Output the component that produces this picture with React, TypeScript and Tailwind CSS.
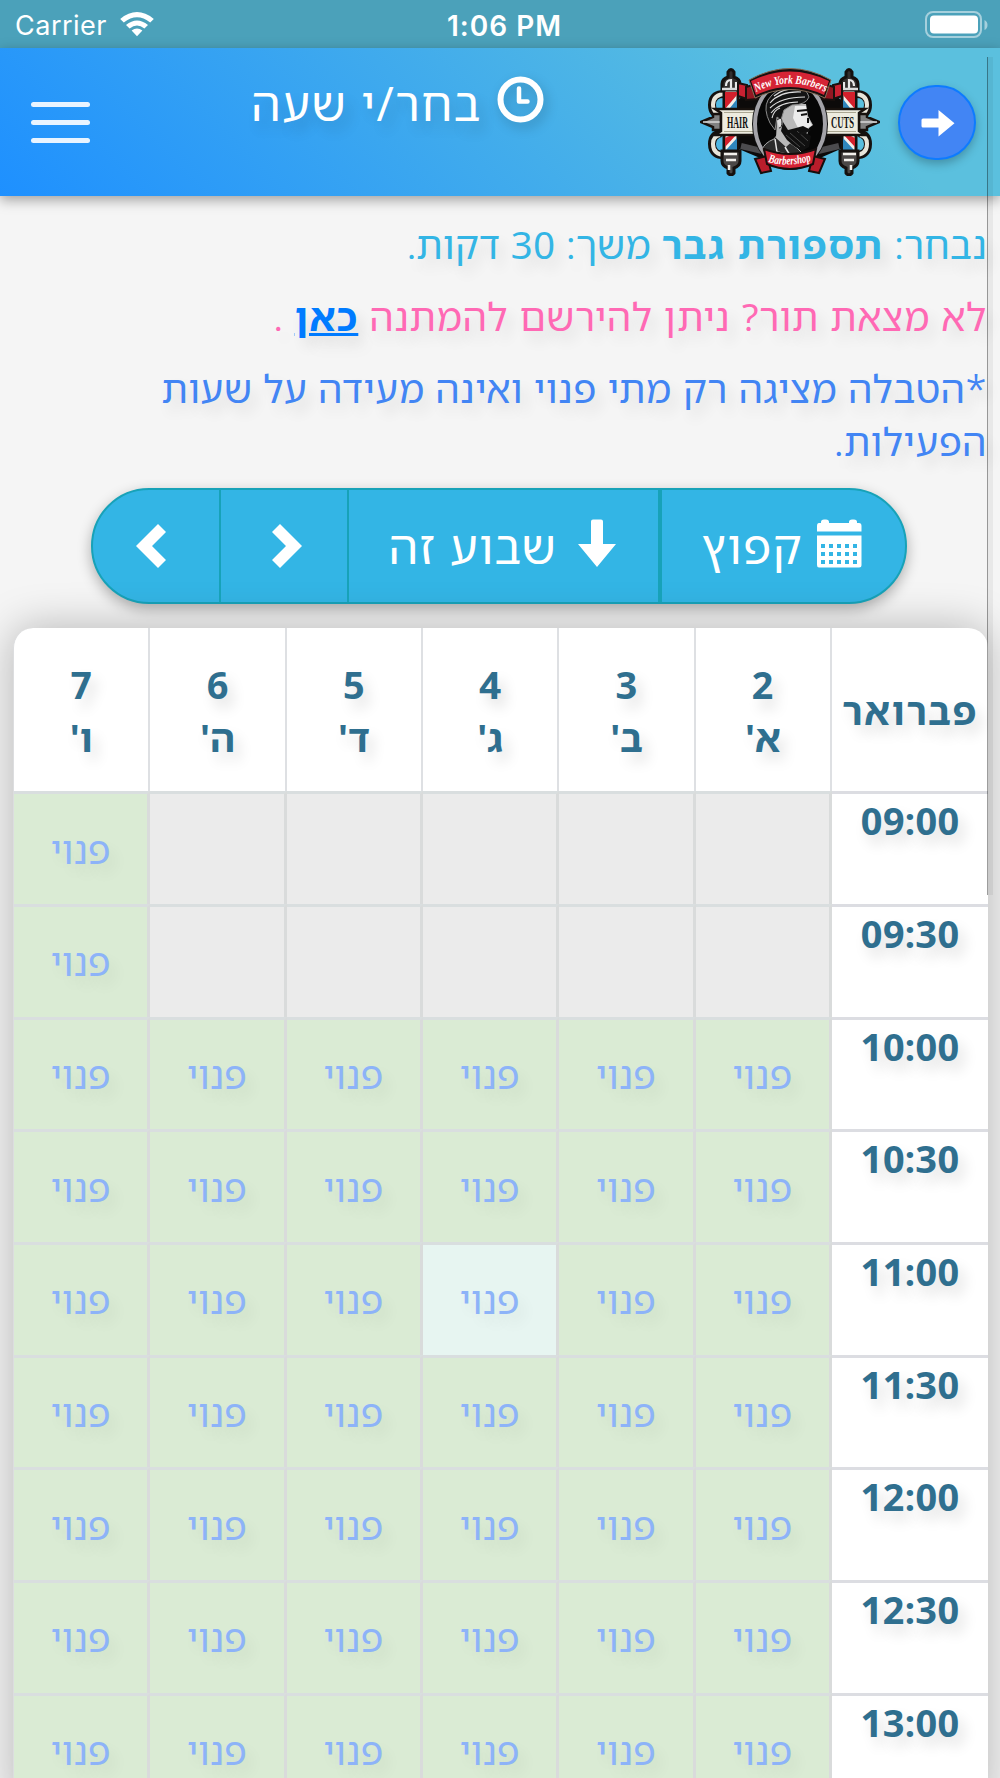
import React from 'react';

interface Day {
  num: number;
  letter: string;
}

const DAYS: Day[] = [
  { num: 2, letter: "א'" },
  { num: 3, letter: "ב'" },
  { num: 4, letter: "ג'" },
  { num: 5, letter: "ד'" },
  { num: 6, letter: "ה'" },
  { num: 7, letter: "ו'" },
];

const TIMES = ['09:00', '09:30', '10:00', '10:30', '11:00', '11:30', '12:00', '12:30', '13:00'];

function slotColor(row: number, col: number) {
  if (row < 2 && col < 5) return 'bg-[#ebebeb]';
  if (row === 4 && col === 2) return 'bg-[#e7f5f1]';
  return 'bg-[#daebd4]';
}

function StatusBar() {
  return (
    <div className="grid h-12 grid-cols-3 items-center bg-[#4ba1ba] pl-[15px] pr-3 font-['Inter'] text-white">
      <div className="flex items-center gap-[13px] pt-[3px]">
        <span className="text-[27px] leading-none tracking-[0.5px]">Carrier</span>
        <svg className="-mt-[3px]" width="34" height="25" viewBox="0 0 34 25" fill="currentColor">
          <path d="M17 24.3 11.6 18.6Q17 14.4 22.4 18.6Z" />
          <path d="M9.6 16.6 6 12.9Q17 3.900 28 12.900L24.400 16.600Q17 10.500 9.600 16.600Z" />
          <path d="M3.800 10.500.2 6.900Q17-6.700 33.800 6.900L30.200 10.500Q17 0 3.800 10.500Z" />
        </svg>
      </div>
      <span className="pl-[6px] pt-[3px] text-center text-[28px] font-semibold leading-none tracking-[1px]">1:06 PM</span>
      <svg className="justify-self-end" width="63" height="27" viewBox="0 0 63 27">
        <rect x="1" y="1" width="55" height="25" rx="7" fill="none" stroke="#a5d0dd" strokeWidth="2" />
        <rect x="5" y="4.500" width="48" height="18" rx="4" fill="#fff" />
        <path d="M59.500 9v10q3-1.500 3-5t-3-5z" fill="#a5d0dd" />
      </svg>
    </div>
  );
}

function BarberPole() {
  return (
    <g stroke="#15110f" strokeWidth="1.200">
      <path d="M-5 29q-14-1-14 11 0 9 9 11M-5 90q-14 1-14-11 0-9 9-11" transform="translate(0,-3)" fill="none" stroke="#15110f" strokeWidth="8" />
      <path d="M-5 29q-13 0-13 11 0 8 7 9M-5 90q-13 0-13-11 0-8 7-9" transform="translate(0,-3)" fill="none" stroke="#e8e5da" strokeWidth="4" />
      <path d="M-9 23V16q0-5 6-7V4q3-5 6 0v5q6 2 6 7v7z" fill="#33302f" strokeWidth="3" />
      <path d="M-5 18q0-6 5-6v8M5 14v7" fill="none" stroke="#e9e9e9" strokeWidth="2.200" />
      <rect x="-7" y="22" width="14" height="65" fill="#f3f0ea" strokeWidth="3" />
      <path d="M-6 24H6V27L-6 41ZM-6 70 2 66H6L-6 79Z" fill="#d3202c" stroke="none" />
      <path d="M-1 40 6 31V40ZM6 70V82H-5Z" fill="#2f86bd" stroke="none" />
      <path d="M-9 83H9v10q0 5-6 7v5q-3 4-6 0v-5q-6-2-6-7z" fill="#4b4847" strokeWidth="3" />
      <path d="M-7 86H6M-5 92H5M-2 97v5" fill="none" stroke="#f2f0ec" strokeWidth="2.500" />
      <path d="M-9 21H9" stroke="#dadada" strokeWidth="2.500" />
    </g>
  );
}

function Logo() {
  return (
    <svg width="180" height="108" viewBox="0 0 180 108" className="shrink-0 [direction:ltr]">
      <path d="M27 40 51 22H128L152 40V76L120 90H60L27 76Z" fill="#0c0a0a" />
      <path d="M41 78 66 84M139 78 114 84" stroke="#4c4b4e" strokeWidth="6" />
      <g transform="translate(31,0)">
        <BarberPole />
      </g>
      <g transform="translate(149,0) scale(-1,1)">
        <BarberPole />
      </g>
      <path d="M1 54 13 49V46H21V62H13V59ZM179 54 167 49V46H159V62H167V59Z" fill="#818181" stroke="#17110e" strokeWidth="2.500" />
      <path d="M3 54H20M160 54H177" stroke="#d8d8d8" strokeWidth="1.500" />

      {/* side ribbons */}
      <path d="M15 41H61V67H15L21 63V45ZM165 41H119V67H165L159 63V45Z" fill="#eeece0" stroke="#17110e" strokeWidth="2.500" />
      <path d="M24 44.500H58M24 63.500H58M122 44.500H156M122 63.500H156" stroke="#aaa692" strokeWidth="1" />
      <text x="27" y="59.500" textLength="21" lengthAdjust="spacingAndGlyphs" fontSize="16" className="fill-[#111111] font-['Liberation_Serif'] font-bold">HAIR</text>
      <text x="131" y="59.500" textLength="23" lengthAdjust="spacingAndGlyphs" fontSize="16" className="fill-[#111111] font-['Liberation_Serif'] font-bold">CUTS</text>

      {/* portrait */}
      <ellipse cx="90" cy="56" rx="38" ry="46" fill="#111" />
      <ellipse cx="90" cy="56" rx="35" ry="43" fill="#060606" stroke="#a3a2a8" strokeWidth="4" />
      <path d="M62 82Q64 75 74 71L78 66 97 80 105 88Q90 98 68 90Z" fill="#2b2b2b" stroke="#aaa" strokeWidth="1" />
      <path d="M77 51 82 41 94 36H106L108 48 113 57 109 60 107 68 96 70 86 79 76 70Z" fill="#b9b9b9" />
      <path d="M95 38H106L107 49 112 57 108 60 98 60 93 50Z" fill="#ececec" />
      <path d="M70 55Q63 41 68 32 75 20 92 19 107 19 109 29 106 37 92 37L84 42 81 52 77 49 75 62Z" fill="#141414" stroke="#8b8b8b" strokeWidth="1" />
      <path d="M70 35Q80 23 101 24M70 40Q81 29 105 29M71 45Q80 34 98 34M74 28Q84 20 96 21M72 50Q74 42 80 40" fill="none" stroke="#dedede" strokeWidth="1.100" />
      <path d="M83 54 88 62 96 60 103 58 111 62 106 65 111 68 109 79 102 83Q94 79 87 72L81 63Z" fill="#101010" />
      <path d="M86 67 100 79M90 65 105 78M97 63 108 73" stroke="#555" strokeWidth="0.800" />
      <path d="M97 43 107 42M101 47 107 46M108 50V55M99 66 106 64" stroke="#131313" strokeWidth="2" />
      <path d="M77 52Q82 48 82 54T79 60" fill="#ddd" stroke="#222" />
      <path d="M75 71 77 84 86 86M85 79 91 89" fill="none" stroke="#e6e6e6" strokeWidth="1.500" />

      {/* top and bottom banners */}
      <path d="M38 15 47 17V31L38 28ZM142 15 133 17V31L142 28Z" fill="#c92132" stroke="#18100e" strokeWidth="2" />
      <path d="M46 19 56 16 58 31 46 32ZM134 19 124 16 122 31 134 32Z" fill="#931722" stroke="#18100e" strokeWidth="2" />
      <path d="M49 12Q90-11 131 12L125 30Q90 13 55 30Z" fill="#171010" stroke="#836c56" strokeWidth="1" />
      <path d="M51 13Q90-6 129 13L124 27Q90 11 56 27Z" fill="#d52435" />
      <path id="top-arc" d="M56 24Q90 7 125 24" fill="none" />
      <text fontSize="12" className="fill-white font-['Liberation_Serif'] font-bold italic">
        <textPath href="#top-arc" textLength="72" lengthAdjust="spacingAndGlyphs">New York Barbers</textPath>
      </text>
      <path d="M55 91 67 88 71 103 61 105ZM125 91 113 88 109 103 119 105Z" fill="#b91d2b" stroke="#170e0d" strokeWidth="2" />
      <path d="M64 81Q90 91 116 81L113 96Q90 106 67 96Z" fill="#d52435" stroke="#170e0d" strokeWidth="2" />
      <path id="bottom-arc" d="M68 94Q90 100 113 92" fill="none" />
      <text fontSize="12" className="fill-white font-['Liberation_Serif'] font-bold italic">
        <textPath href="#bottom-arc" textLength="44" lengthAdjust="spacingAndGlyphs">Barbershop</textPath>
      </text>
    </svg>
  );
}

function Header() {
  return (
    <header
      dir="rtl"
      className="relative flex h-[148px] items-start bg-[linear-gradient(45deg,#1e90ff_0%,#5bc0de_82%)] pr-6 shadow-[0_4px_12px_rgba(0,0,0,0.35)]"
    >
      <button className="mt-[37px] flex h-[75px] w-[78px] items-center justify-center rounded-full border-2 border-[#0d7bff] bg-[#4285f4] pl-[2px] shadow-[0_4px_10px_rgba(0,0,0,0.25)]">
        <svg width="34" height="28" viewBox="0 0 34 28" fill="#fff">
          <path d="M2 9.500H17.500V1L33.500 14.200 17.500 27.500V18.500H2Q.5 18.500.5 17V11Q.5 9.500 2 9.500Z" />
        </svg>
      </button>
      <div className="mr-[18px] mt-[20px]">
        <Logo />
      </div>
      <div className="mr-[156px] mt-[28px] flex items-start gap-[15px] text-white">
        <svg className="drop-shadow-[3px_5px_6px_rgba(0,0,0,0.2)]" width="47" height="47" viewBox="0 0 47 47" fill="none" stroke="#fff">
          <circle cx="23.500" cy="23.500" r="20" strokeWidth="6" />
          <path d="M22 12.500V25.500H30.500" strokeWidth="4.500" strokeLinecap="round" strokeLinejoin="round" />
        </svg>
        <h1 className="mt-[3px] whitespace-nowrap text-[47px] leading-[48px] tracking-[1.400px] [text-shadow:6px_9px_14px_rgba(0,0,0,0.14)]">בחר/י שעה</h1>
      </div>
      <div className="mr-auto ml-[31px] mt-[54px] flex w-[59px] flex-col gap-[13px]">
        <span className="h-[5px] rounded-full bg-[#e9f4ff]" />
        <span className="h-[5px] rounded-full bg-[#e9f4ff]" />
        <span className="h-[5px] rounded-full bg-[#e9f4ff]" />
      </div>
    </header>
  );
}

function CalendarIcon() {
  return (
    <svg width="45" height="49" viewBox="0 0 45 49" fill="#fff">
      <path fillRule="evenodd" d="M2 4H4V3Q4 .5 7 .5H9Q12 .5 12 3V4H32V3Q32 .5 35 .5H37Q40 .5 40 3V4H42Q44.500 4 44.500 7V12.500H0V7Q0 4 2 4ZM0 16.500H44.500V46Q44.500 48.500 42 48.500H2Q0 48.500 0 46ZM4 25v4h4v-4zm8 0v4h4v-4zm8 0v4h4v-4zm8 0v4h4v-4zm8 0v4h4v-4zM4 33v4h4v-4zm8 0v4h4v-4zm8 0v4h4v-4zm8 0v4h4v-4zm8 0v4h4v-4zM4 41v4h4v-4zm8 0v4h4v-4zm8 0v4h4v-4zm8 0v4h4v-4zm8 0v4h4v-4z" />
    </svg>
  );
}

function WeekNav() {
  return (
    <div
      dir="rtl"
      className="mr-[93px] mt-[20px] flex h-[116px] w-[816px] overflow-hidden rounded-full border-2 border-[#17a2b8] bg-[#33b5e5] text-[47px] tracking-[1.200px] text-white shadow-[0_5px_14px_rgba(0,0,0,0.3)]"
    >
      <button className="flex w-[247px] items-center gap-[14px] border-l-[4px] border-[#17a2b8] pr-[43px]">
        <span className="-mt-[6px]">
          <CalendarIcon />
        </span>
        <span>קפוץ</span>
      </button>
      <button className="flex w-[311px] items-center gap-[21px] border-l-2 border-[#17a2b8] pr-[42px]">
        <svg className="-mt-[6px]" width="38" height="48" viewBox="0 0 38 48" fill="#fff">
          <path d="M13 2.500Q13 .5 15 .5H23Q25 .5 25 2.500V25H38L19 48 0 25H13Z" />
        </svg>
        <span>שבוע זה</span>
      </button>
      <button className="flex w-[128px] items-center justify-center border-l-2 border-[#17a2b8] pl-[6px]">
        <svg width="30" height="44" viewBox="0 0 30 44" fill="#fff">
          <path d="M8 0 30 22 8 44 0 36 14 22 0 8Z" />
        </svg>
      </button>
      <button className="flex flex-1 items-center justify-center pr-[10px]">
        <svg width="30" height="44" viewBox="0 0 30 44" fill="#fff">
          <path d="M22 0 0 22 22 44 30 36 16 22 30 8Z" />
        </svg>
      </button>
    </div>
  );
}

function Schedule() {
  return (
    <div className="mr-3 ml-[13px] mt-6 overflow-hidden rounded-t-[20px] border-l border-[#dcdddf] bg-white shadow-[0_0_44px_rgba(0,0,0,0.27)]">
      <div dir="rtl" className="grid h-[163.300px] grid-cols-[156px_repeat(6,1fr)] text-center text-[38px] font-bold leading-[53px] text-[#2f6f8f] [text-shadow:6px_9px_14px_rgba(0,0,0,0.13)]">
        <div className="pt-[56px] tracking-[1.700px]">פברואר</div>
        {DAYS.map((day) => (
          <div key={day.num} className="border-r-2 border-[#dee0e3] pt-[30px]">
            <div>{day.num}</div>
            <div>{day.letter}</div>
          </div>
        ))}
      </div>
      {TIMES.map((time, row) => (
        <div key={time} dir="rtl" className="grid h-[112.700px] grid-cols-[156px_repeat(6,1fr)] text-center text-[38px]">
          <div className="border-t-[3px] border-[#dcdde2] font-bold leading-[53px] text-[#2f6f8f] [text-shadow:6px_9px_14px_rgba(0,0,0,0.13)]">
            {time}
          </div>
          {DAYS.map((day, col) => (
            <div
              key={day.num}
              className={`flex items-center justify-center border-t-[3px] border-r-[3px] border-t-[#d9dedf] border-r-[#d9dbdb] text-[#8db3f8] [text-shadow:6px_9px_14px_rgba(0,0,0,0.08)] ${slotColor(row, col)}`}
            >
              {row < 2 && col < 5 ? '' : 'פנוי'}
            </div>
          ))}
        </div>
      ))}
    </div>
  );
}

export default function App() {
  return (
    <div className="relative h-[1778px] w-[1000px] overflow-hidden bg-[#f5f5f5] font-['Noto_Sans_Hebrew','Open_Sans','Noto_Sans',sans-serif]">
      <StatusBar />
      <Header />
      <div dir="rtl" className="mt-[22px] mr-[13px] text-[38.500px] leading-[53px] tracking-[0.500px] [text-shadow:6px_9px_14px_rgba(0,0,0,0.11)]">
        <p className="tracking-[0.200px] text-[#33b5e5]">
          נבחר: <b className="tracking-[1.600px]">תספורת גבר</b> משך: 30 דקות.
        </p>
        <p className="mt-[19px] tracking-[0.700px] text-[#ff69b4]">
          לא מצאת תור? ניתן להירשם להמתנה <a className="font-bold tracking-[1.200px] text-[#007bff] underline">כאן</a> .
        </p>
        <p className="mt-[19px] w-[860px] text-[#4285f4]">
          *הטבלה מציגה רק מתי פנוי ואינה מעידה על שעות הפעילות.
        </p>
      </div>
      <div dir="rtl">
        <WeekNav />
      </div>
      <Schedule />

      {/* scroll thumb */}
      <div className="absolute left-[987px] top-[57px] h-[838px] w-[6px] border-l border-black/35 bg-black/5" />
    </div>
  );
}
